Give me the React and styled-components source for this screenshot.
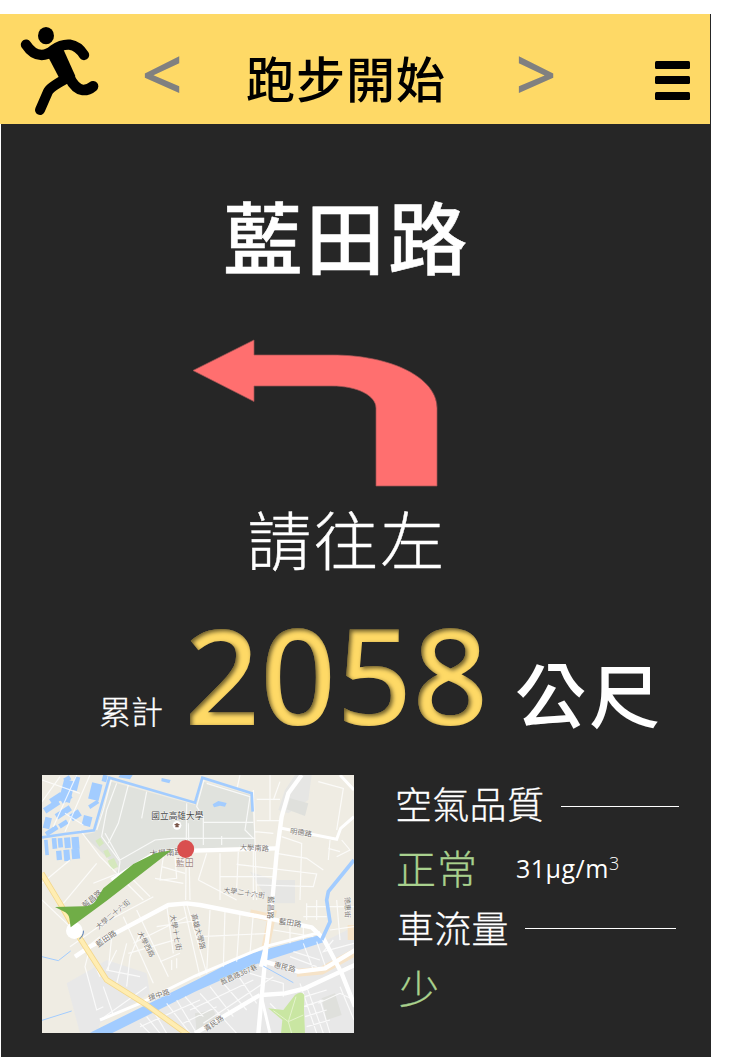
import React from "react";
import styled, { createGlobalStyle } from "styled-components";

const GlobalStyle = createGlobalStyle`
  * { box-sizing: border-box; }
  body {
    margin: 0;
    background: #fff;
    font-family: "Open Sans", "Noto Sans CJK TC", sans-serif;
  }
`;

const Page = styled.div`
  padding-top: 14px;
  height: 1057px;
  overflow: hidden;
`;

const Screen = styled.main`
  width: 710px;
  height: 1043px;
  margin-left: 1px;
  background: #262626;
  color: #fff;
`;

const Header = styled.header`
  display: flex;
  width: 710px;
  height: 110px;
  margin-left: -1px;
  padding-left: 20px;
  background: #fed966;
  color: #000;
`;

const RunnerIcon = styled.svg`
  width: 80px;
  height: 92px;
  margin-top: 11px;
`;

const Step = styled.button`
  width: 42px;
  margin-left: ${(p) => p.$gap}px;
  padding: 0;
  border: 0;
  background: none;
  color: #808080;
  font: 600 72px/118px "Open Sans", sans-serif;
  text-align: center;
`;

const Title = styled.h1`
  width: 210px;
  margin: 0 0 0 58px;
  font: 500 49px/126px "Noto Sans CJK TC", sans-serif;
  letter-spacing: 1px;
  text-align: center;
  white-space: nowrap;
`;

const MenuIcon = styled.svg`
  width: 35px;
  height: 40px;
  margin: 47px 0 0 98px;
`;

const RoadName = styled.h2`
  width: 692px;
  margin: 61px 0 0;
  font: 500 79px/100px "Noto Sans CJK TC", sans-serif;
  -webkit-text-stroke: 0.5px #fff;
  letter-spacing: 3.5px;
  text-align: center;
`;

const TurnArrow = styled.svg`
  display: block;
  width: 246px;
  height: 148px;
  margin: 54px 0 0 191px;
`;

const Instruction = styled.p`
  width: 692px;
  margin: 10px 0 0;
  font: 300 64px/80px "Noto Sans CJK TC", sans-serif;
  -webkit-text-stroke: 0.4px #fff;
  letter-spacing: 2.5px;
  text-align: center;
`;

const Distance = styled.section`
  display: flex;
  align-items: flex-end;
  height: 172px;
  padding-left: 98px;
`;

const Label = styled.span`
  width: 85px;
  font: 300 32px/40px "Noto Sans CJK TC", sans-serif;
  -webkit-text-stroke: 0.3px #fff;
  padding-bottom: 19px;
  box-sizing: content-box;
`;

const Count = styled.strong`
  width: 331px;
  font: 500 133px/150px "Noto Sans", sans-serif;
  color: #fed966;
  filter: url(#engrave);
`;

const Unit = styled.span`
  font: 500 71px/90px "Noto Sans CJK TC", sans-serif;
  letter-spacing: 3px;
  padding-bottom: 13px;
`;

const Bottom = styled.section`
  display: flex;
  margin: 26px 0 0 41px;
`;

const MapView = styled.svg`
  display: block;
  width: 312px;
  height: 258px;
  background: #efece3;
`;

const Stats = styled.div`
  width: 290px;
  margin-left: 41px;
`;

const StatHead = styled.div`
  display: flex;
  align-items: center;
  height: 60px;
  margin-top: ${(p) => p.$top}px;
  padding-left: ${(p) => p.$indent}px;
  font: 300 37px/60px "Noto Sans CJK TC", sans-serif;
  -webkit-text-stroke: 0.3px #fff;
  letter-spacing: 0.3px;
  white-space: nowrap;
`;

const Rule = styled.i`
  width: ${(p) => p.$w}px;
  height: 1px;
  margin: ${(p) => p.$drop}px 0 0 ${(p) => p.$gap}px;
  background: #fff;
`;

const StatValue = styled.div`
  display: flex;
  align-items: center;
  height: ${(p) => p.$h}px;
  padding-left: ${(p) => p.$indent}px;
  color: #a9d18e;
  font: 300 40px/60px "Noto Sans CJK TC", sans-serif;
  letter-spacing: 1px;
  -webkit-text-stroke: 0.3px #a9d18e;
`;

const Reading = styled.span`
  margin: 2px 0 0 38px;
  color: #fff;
  font: 400 25px/40px "Open Sans", sans-serif;
  -webkit-text-stroke: 0;
  letter-spacing: 0.5px;
  sup {
    font-size: 18px;
    font-weight: 300;
    line-height: 0;
    vertical-align: 8px;
  }
`;

const MapLabel = styled.text`
  font: 400 ${(p) => p.$size || 25}px "Noto Sans CJK TC", sans-serif;
  fill: ${(p) => p.$fill || "#77736d"};
  stroke: #fff;
  stroke-width: 2px;
  paint-order: stroke;
  text-anchor: middle;
  dominant-baseline: central;
`;

const labels = [
  ["國立高雄大學", 412, 135, 0, 23, "#444"],
  ["藍田", 434, 276, 0, 24, "#a1887f"],
  ["大學南路", 378, 245, -4, 22],
  ["大學南路", 643, 231, 3, 19],
  ["明德路", 783, 185, 8, 19],
  ["大學二十六街", 613, 367, 8, 18],
  ["大學二十六街", 218, 432, -40, 18],
  ["藍昌路", 155, 385, -40, 20],
  ["藍田路", 197, 504, -35, 20],
  ["藍田路", 751, 456, 9, 20],
  ["大學西路", 320, 522, 62, 18],
  ["大學十七街", 410, 487, 80, 19],
  ["高雄大學路", 478, 484, 75, 19],
  ["援中路", 356, 672, -18, 19],
  ["藍昌路367巷", 596, 612, -24, 18],
  ["惠民路", 735, 589, 14, 19],
  ["青民路", 520, 758, -35, 19],
  ["藍昌路", 694, 413, 92, 20],
  ["德惠街", 924, 412, 88, 18],
];

const fields = [
  [64, 30, 34, 66], [30, 75, 40, 22], [100, 20, 16, 42], [10, 100, 50, 18], [45, 118, 50, 18],
  [12, 142, 20, 34], [90, 125, 32, 22], [128, 138, 26, 30], [150, 40, 32, 50], [145, 97, 32, 12],
  [62, 78, 34, 16], [187, 15, 14, 20], [15, 175, 40, 14], [56, 155, 28, 14], [72, 20, 20, 14],
];

const paddies = [
  [12, 210, 11, 46], [35, 205, 14, 32], [53, 205, 14, 28], [72, 203, 18, 32], [94, 202, 22, 36],
  [48, 243, 16, 28], [70, 240, 18, 34], [94, 238, 24, 30],
];

function CityMap() {
  return (
    <MapView viewBox="6 15 936 774" preserveAspectRatio="none">
      <path d="M942 470L850 515L655 580L465 665L215 790H942ZM80 640L150 600L200 570L320 610L330 670L180 760L170 790H120Z" fill="#e8e8e8" />
      <path d="M765 15H815L805 90L745 130L715 120L735 60ZM630 305L700 330H765V400H690Z" fill="#e6e6e4" />
      <path d="M215 35L465 105L490 35L635 75L645 230L400 238L215 330L235 295L130 195L165 187Z" fill="#e0e2dd" />
      <path d="M750 85L805 100L795 138L740 118ZM465 730L520 720L540 760L470 790ZM845 685L885 670L905 735L860 750Z" fill="#dfe0dc" />
      <g fill="#a2ccff">
        {fields.map(([x, y, w, h]) => (
          <rect key={x + "-" + y} x={x} y={y} width={w} height={h} transform={`rotate(${w > h ? -33 : 14} ${x + w / 2} ${y + h / 2})`} />
        ))}
        {paddies.map(([x, y, w, h]) => (
          <rect key={x + "-" + y} x={x} y={y} width={w} height={h} transform={`rotate(-5 ${x} ${y})`} />
        ))}
        <path d="M240 15H278L270 28L235 22ZM365 24L392 30L388 40L364 34ZM518 103L535 93L560 99L555 110L540 107L522 112Z" />
        <path d="M150 788L465 632L615 555L840 495L850 517L655 580L465 665L215 790Z" />
      </g>
      <path d="M166 212L181 203L192 220L178 230ZM190 243L203 238L213 257L199 263ZM203 272L222 264L234 290L215 300Z" fill="#d5e8bd" />
      <g fill="none" stroke="#f6e3c8" strokeWidth="24">
        <path d="M630 430L700 445M699 420L676 535M770 608L845 602L942 548M935 465V510" />
      </g>
      <g fill="none" stroke="#fff" strokeWidth="3.500" opacity=".8">
        <path d="M6 30L120 70M110 15L40 170M150 15L75 185M215 25L190 120L170 180M6 95L60 20M75 130L130 165M195 190L240 270L345 210L395 205H645" />
        <path d="M230 40L200 120L185 200L240 275L235 310L160 340M265 45L235 160L205 220M320 65L305 145M440 100L437 390M445 160L450 390" />
        <path d="M492 30L470 110L490 140V225M490 157H640M500 40L630 80L615 180L640 205M545 198V225M640 60L650 390M650 88H720M650 152H720M645 185L700 190M690 15V150M600 15L590 60M720 35L700 90" />
        <path d="M835 35L910 55L890 180M870 210L865 270M905 210L930 240L890 260M865 235L900 245M725 200L785 220L780 390M710 250L800 265L850 300M590 283L830 312L820 350L650 345M540 320H700M475 330L590 390M595 245L590 360M500 250L475 330M540 250V390M640 240V390" />
        <path d="M120 180L180 260L310 390M6 340L90 270M70 400L170 280M90 470L6 390M270 320L330 380M370 260L360 330L410 325L405 260M365 290L435 310M345 325L430 340" />
        <path d="M90 530L190 460L340 380M105 560L180 500M150 530L135 590L170 720L190 710M150 550L180 620M215 500L205 600M250 440L340 640M290 420L385 620M260 520L230 640M230 540L200 600L300 620M300 490L270 560L260 650M380 405L400 550M430 400L480 620M440 400L500 610M280 520L440 440M265 550L420 505M190 650L220 735M180 750L320 650M350 470L480 450M360 575L420 550M395 570V600M410 565V595" />
        <path d="M480 500L690 490M510 420L500 610M555 420L550 590M600 430L590 575M640 430L630 550M700 480L820 500M750 460V520M790 470V510M800 400V450M830 390V450M890 390L900 510M800 410H942M790 440H860M870 480L942 470M880 510L850 545L942 520" />
        <path d="M300 760L330 790M320 740L360 790M345 730L380 790M380 700L450 790M410 690L470 790M435 680L490 740M300 770L480 690M430 760L530 710M480 670L590 790M510 650L580 740M550 640L620 720M590 610L650 700M450 720L640 630M490 760L700 620M630 610L730 640V680M690 700L730 740L790 670M750 560L830 590M760 545L840 570M790 520L820 600M830 515L860 600M780 640L830 790M800 650L850 790M795 680L860 660M790 710L850 690M795 740L860 720M800 770L870 750M835 700L900 670L942 690M840 690L870 790M900 650L942 750" />
      </g>
      <path d="M685 715L730 720L765 675Q785 662 793 675L792 720L795 790H723L727 750Z" fill="#c9e6a2" />
      <path d="M700 722L745 755L755 790M768 680L745 755L790 735" fill="none" stroke="#e4f3cd" strokeWidth="3" />
      <g fill="none" stroke="#fff" strokeWidth="13" strokeLinejoin="round">
        <path d="M215 330L345 250L395 242H465L710 235" />
        <path d="M785 15L745 70L725 140L710 250L697 390L680 520L665 680L655 790" />
        <path d="M105 560L150 530L385 405L440 400L480 405L685 445L815 472L850 505L905 610L945 710" />
        <path d="M665 675L735 670L795 655L945 585M660 675L465 790M675 575L775 605L855 595L945 540" />
      </g>
      <g fill="none" stroke="#fff" strokeWidth="9">
        <path d="M725 175L890 208L902 175L942 140M900 15L942 60M180 750L300 700L465 618L675 530L840 487M663 675L690 790" />
      </g>
      <g fill="none" stroke="#a2ccff">
        <path d="M6 202L75 192L162 181L208 23L465 98L487 23L635 70L638 125" strokeWidth="8" />
        <path d="M845 510L870 455L860 390L865 365L942 270" strokeWidth="11" />
        <path d="M6 560L55 572L92 543M6 751L95 723M655 580L760 638" strokeWidth="3" />
      </g>
      <path d="M663 590L680 520" fill="none" stroke="#fff" strokeWidth="13" />
      <path d="M5 310L60 400L120 505L200 630L320 705L445 795" fill="none" stroke="#f3d78c" strokeWidth="17" />
      <path d="M5 310L60 400L120 505L200 630L320 705L445 795" fill="none" stroke="#ffedb2" strokeWidth="12" />
      {labels.map(([t, x, y, r, s, f]) => (
        <MapLabel key={t + x} $size={s + 3} $fill={f} transform={`translate(${x} ${y}) rotate(${r})`}>{t}</MapLabel>
      ))}
      <circle cx="411" cy="166" r="13" fill="#fff" />
      <path d="M402 164L411 159L420 164L411 169ZM406 168H416V172H406Z" fill="#795548" />
      <path d="M118 507Q131 498 130 482" fill="none" stroke="#4a76b8" strokeWidth="3" />
      <circle cx="103" cy="482" r="25" fill="#fff" />
      <path d="M395 241L345 250L280 282L190 355L165 395Q155 407 130 409L45 411L70 424Q86 431 88 445L92 472L200 392Z" fill="#70ad47" />
      <ellipse cx="437" cy="237" rx="25.5" ry="27" fill="#d94f4f" />
    </MapView>
  );
}

export default function App() {
  return (
    <Page>
      <GlobalStyle />
      <svg width="0" height="0" style={{ position: "absolute" }}>
        <filter id="engrave" x="-5%" y="-5%" width="110%" height="110%" colorInterpolationFilters="sRGB">
          <feOffset in="SourceAlpha" dx="2.2" dy="2.2" result="o" />
          <feGaussianBlur in="o" stdDeviation="2" result="b" />
          <feComposite in="SourceAlpha" in2="b" operator="out" result="edge" />
          <feFlood floodColor="#000" floodOpacity=".58" />
          <feComposite in2="edge" operator="in" result="shade" />
          <feMerge>
            <feMergeNode in="SourceGraphic" />
            <feMergeNode in="shade" />
          </feMerge>
        </filter>
      </svg>
      <Screen>
        <Header>
          <RunnerIcon viewBox="60 75 240 276">
            <ellipse cx="138" cy="107" rx="24" ry="26" />
            <path d="M78 134Q98 165 125 165Q142 165 160 150Q185 132 209 134Q235 138 252 165" fill="none" stroke="#000" strokeWidth="31" strokeLinecap="round" strokeLinejoin="round" />
            <path d="M145 172L178 235L215 255L226 228L190 148L160 145Z" />
            <path d="M196 237Q150 262 144 275L120 330" fill="none" stroke="#000" strokeWidth="30" strokeLinecap="round" strokeLinejoin="round" />
            <path d="M207 230Q225 267 248 270Q265 271 279 259" fill="none" stroke="#000" strokeWidth="32" strokeLinecap="round" />
          </RunnerIcon>
          <Step $gap={41}>&lt;</Step>
          <Title>跑步開始</Title>
          <Step $gap={64}>&gt;</Step>
          <MenuIcon viewBox="0 0 35 40">
            <rect y="0" width="35" height="8" rx="1.5" />
            <rect y="15" width="35" height="8" rx="1.5" />
            <rect y="31" width="35" height="8" rx="1.5" />
          </MenuIcon>
        </Header>
        <RoadName>藍田路</RoadName>
        <TurnArrow viewBox="192 339 246 148">
          <path d="M193 370.5L254 340V355H332C392 355 437 378 437 408V486H376V408C376 396 358 386 332 386H254V401.500Z" fill="#ff6f6f" stroke="#a05555" strokeWidth=".7" />
        </TurnArrow>
        <Instruction>請往左</Instruction>
        <Distance>
          <Label>累計</Label>
          <Count>2058</Count>
          <Unit>公尺</Unit>
        </Distance>
        <Bottom>
          <CityMap />
          <Stats>
            <StatHead $top={-2} $indent={0}>空氣品質<Rule $w={118} $gap={17} $drop={7} /></StatHead>
            <StatValue $indent={1} $h={68}>
              正常
              <Reading>31µg/m<sup>3</sup></Reading>
            </StatValue>
            <StatHead $top={-4} $indent={2}>車流量<Rule $w={151} $gap={16} $drop={3} /></StatHead>
            <StatValue $indent={4} $h={60}>少</StatValue>
          </Stats>
        </Bottom>
      </Screen>
    </Page>
  );
}
